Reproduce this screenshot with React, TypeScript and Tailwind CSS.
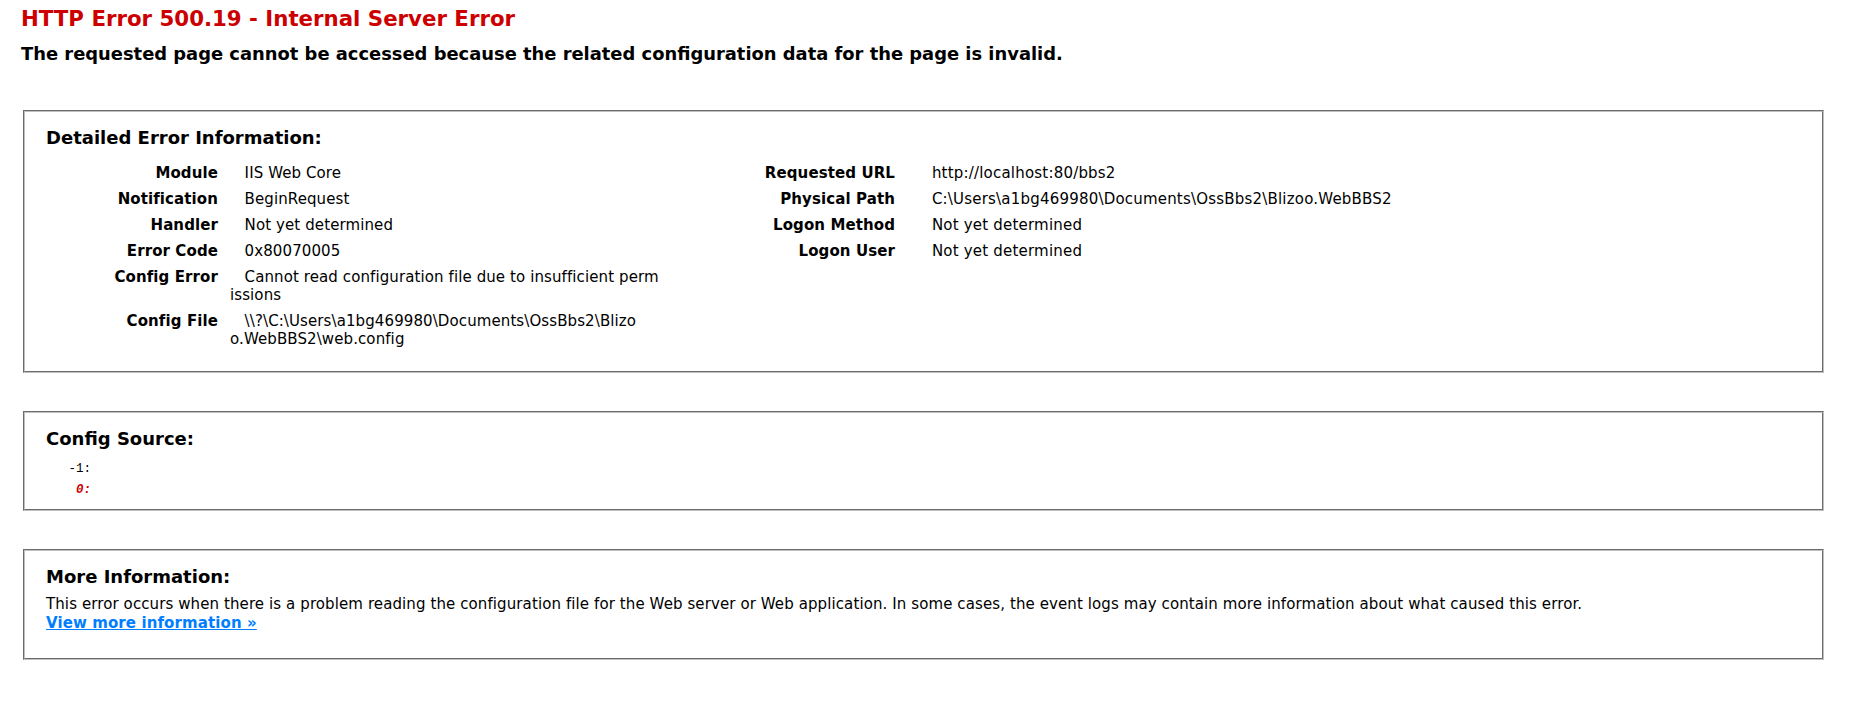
import React from "react";

const left: [string, string[]][] = [
  ["Module", ["\u00a0\u00a0\u00a0IIS Web Core"]],
  ["Notification", ["\u00a0\u00a0\u00a0BeginRequest"]],
  ["Handler", ["\u00a0\u00a0\u00a0Not yet determined"]],
  ["Error Code", ["\u00a0\u00a0\u00a00x80070005"]],
  [
    "Config Error",
    ["\u00a0\u00a0\u00a0Cannot read configuration file due to insufficient perm", "issions"],
  ],
  [
    "Config File",
    ["\u00a0\u00a0\u00a0\\\\?\\C:\\Users\\a1bg469980\\Documents\\OssBbs2\\Blizo", "o.WebBBS2\\web.config"],
  ],
];

const right: [string, string][] = [
  ["Requested URL", "\u00a0\u00a0\u00a0http://localhost:80/bbs2"],
  ["Physical Path", "\u00a0\u00a0\u00a0C:\\Users\\a1bg469980\\Documents\\OssBbs2\\Blizoo.WebBBS2"],
  ["Logon Method", "\u00a0\u00a0\u00a0Not yet determined"],
  ["Logon User", "\u00a0\u00a0\u00a0Not yet determined"],
];

function Box({ children, className }: { children: React.ReactNode; className: string }) {
  return (
    <div
      className={
        "ml-[23px] mr-[33px] border-2 [border-style:groove] border-[#c0c0c0] pl-[21px] pr-[19px] pt-[15px] " + className
      }
    >
      {children}
    </div>
  );
}

export default function App() {
  return (
    <div className="min-h-[702px] bg-white text-[15px] leading-[18px] tracking-[0.1px] text-black font-['DejaVu_Sans',Verdana,sans-serif]">
      <div className="pl-[21px] pt-[7px]">
        <h3 className="text-[21.3px] leading-[24px] font-bold tracking-normal text-[#CC0000]">
          HTTP Error 500.19 - Internal Server Error
        </h3>
        <h4 className="mt-[13px] text-[17.9px] leading-[20px] font-bold tracking-normal">
          The requested page cannot be accessed because the related configuration data for the page is invalid.
        </h4>
      </div>

      <Box className="mt-[46px] pb-[19px]">
        <h4 className="mt-[1px] text-[18px] leading-[20px] font-bold tracking-normal">Detailed Error Information:</h4>
        <div className="mt-[12px] flex">
          <div className="w-[615px] shrink-0">
            {left.map(([k, v]) => (
              <div key={k} className="flex py-[4px]">
                <div className="w-[184px] shrink-0 pr-[12px] text-right font-bold">{k}</div>
                <div className="flex flex-col whitespace-nowrap">
                  {v.map((line, i) => (
                    <span key={i}>{line}</span>
                  ))}
                </div>
              </div>
            ))}
          </div>
          <div className="ml-[35px] flex-1">
            {right.map(([k, v]) => (
              <div key={k} className="flex py-[4px]">
                <div className="w-[221px] shrink-0 pr-[22px] text-right font-bold">{k}</div>
                <div className="whitespace-nowrap tracking-[0.2px]">{v}</div>
              </div>
            ))}
          </div>
        </div>
      </Box>

      <Box className="mt-[38px] pb-[9px]">
        <h4 className="mt-[1px] text-[18px] leading-[20px] font-bold tracking-normal">Config Source:</h4>
        <pre className="mt-[9px] text-[12.5px] leading-[19px] tracking-normal font-['DejaVu_Sans_Mono',Consolas,monospace]">
          <code>{"   -1: "}</code>
          {"\n"}
          <code className="font-bold italic text-[#CC0000]">{"    0: "}</code>
        </pre>
      </Box>

      <Box className="mt-[38px] pb-[25px]">
        <h4 className="mt-[1px] text-[18px] leading-[20px] font-bold tracking-normal">More Information:</h4>
        <p className="mt-[8px] leading-[19px]">
          This error occurs when there is a problem reading the configuration file for the Web server or Web
          application. In some cases, the event logs may contain more information about what caused this error.
          <br />
          <a href="#" className="font-bold text-[#007EFF] underline">
            View more information &raquo;
          </a>
        </p>
      </Box>
    </div>
  );
}
